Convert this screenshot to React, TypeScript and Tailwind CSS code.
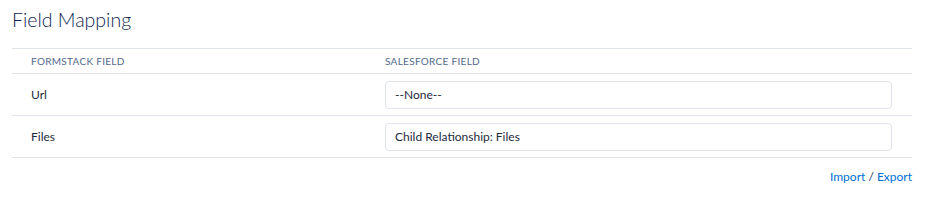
import React from 'react';

interface MappingRow {
  source: string;
  target: string;
}

const rows: MappingRow[] = [
  { source: 'Url', target: '--None--' },
  { source: 'Files', target: 'Child Relationship: Files' },
];

const App: React.FC = () => {
  return (
    <div className="w-[936px] h-[202px] bg-white px-3 pt-[7px] font-['Lato',sans-serif] text-[#16325c]">
      <h2 className="text-[19.5px] leading-[26px] font-light text-[#0d2554]">Field Mapping</h2>

      {/* Mapping table */}
      <div className="mt-[15px] w-[900px] border-t border-[#dfe3ea]">
        <div className="flex h-[25px] items-center border-b border-[#dfe3ea] text-[10px] tracking-[0.3px] uppercase text-[#54698d]">
          <div className="w-[373px] pl-[19px]">Formstack Field</div>
          <div className="flex-1">Salesforce Field</div>
        </div>
        {rows.map((row) => (
          <div
            key={row.source}
            className="flex h-[42px] items-center border-b border-[#dfe3ea] text-[12px] text-[#1d2b3e]"
          >
            <div className="w-[373px] pl-[19px]">{row.source}</div>
            <div className="flex-1 pr-[20px]">
              <div className="flex h-[28px] items-center rounded-[4px] border border-[#dfe3ea] px-[9px]">
                {row.target}
              </div>
            </div>
          </div>
        ))}
      </div>

      <div className="mt-[10px] w-[900px] text-right text-[12px] text-[#0070d2]">
        <a href="#" className="hover:underline">Import</a>
        <span className="text-[#16325c]"> / </span>
        <a href="#" className="hover:underline">Export</a>
      </div>
    </div>
  );
};

export default App;
